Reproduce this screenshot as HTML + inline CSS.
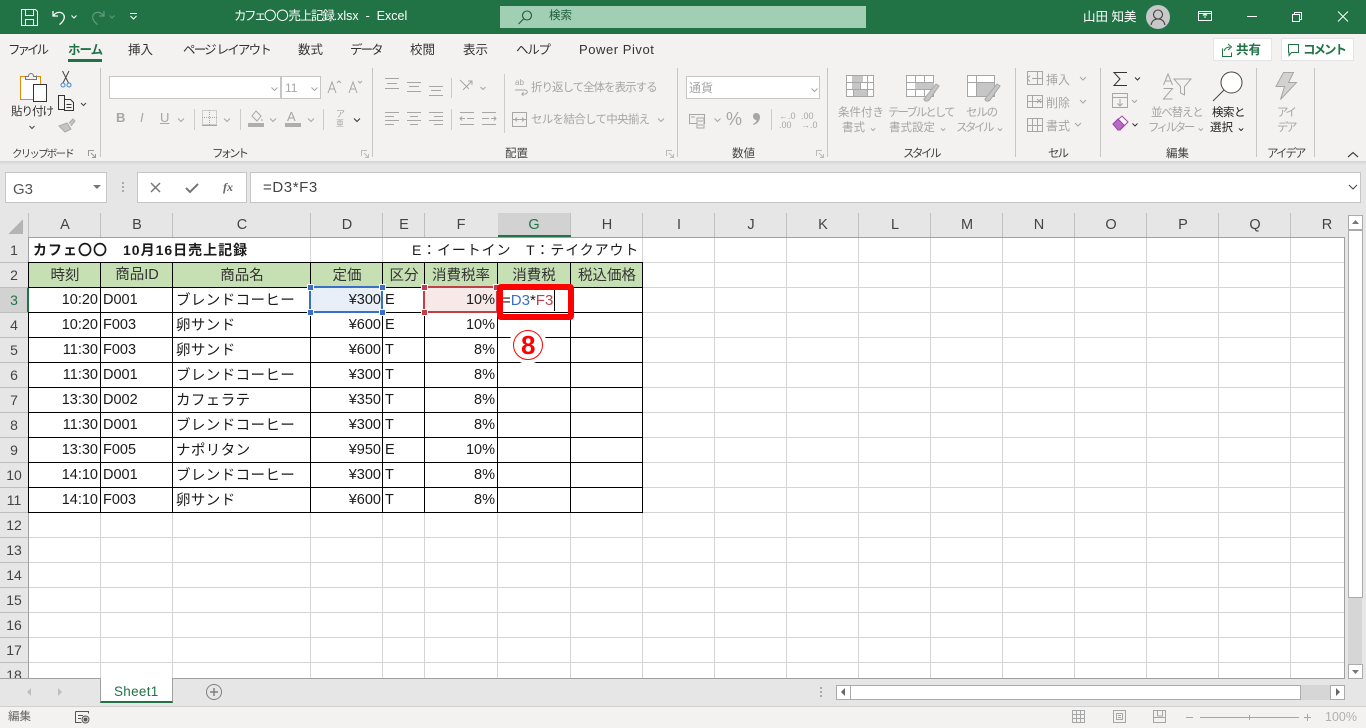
<!DOCTYPE html>
<html lang="ja"><head><meta charset="utf-8"><title>Excel</title>
<style>
*{box-sizing:border-box}
html,body{margin:0;padding:0;width:1366px;height:728px;overflow:hidden;background:#e6e6e6}
body{position:relative;font-family:"Liberation Sans","Noto Sans CJK JP",sans-serif;color:#222}
.a,.t,.c,.r,.h,.rh{position:absolute}
.t,.c,.r,.h,.rh{white-space:nowrap;line-height:1}
.tb{font-size:12.5px;color:#333;top:44px}
.g{color:#a6a6a6;font-size:11.5px}
.d{color:#333;font-size:11.5px}
.l{color:#444;font-size:11.5px;top:149px}
.c{font-size:14.5px;color:#1a1a1a;transform:translateX(-50%)}
.r{font-size:14.5px;color:#1a1a1a;transform:translateX(-100%)}
.h{font-size:14.5px;color:#1a1a1a}
.j{letter-spacing:.4px}
.rh{font-size:14px;color:#444;width:28px;left:0;text-align:center}
.sep{position:absolute;top:68px;width:1px;height:89px;background:#c6c6c6}
svg{position:absolute;overflow:visible}
</style></head><body>
<!-- title bar -->
<div class="a" style="left:0;top:0;width:1366px;height:34px;background:#217346"></div>
<svg style="left:0;top:0" width="1366" height="34" fill="none" stroke="#fff" stroke-width="1">
<path d="M21.5 9.5h14l2 2v14h-16zM25.5 9.5v6h8v-6M25.5 25.5v-6h8v6"/>
<path d="M53 11v5h5M53.500 15.500c3-4 8-4 10-1 2 3 0 7-4 10" stroke-width="1.300"/>
<path d="M71.500 15.500l2.500 2.500 2.500-2.500" stroke-width="1"/>
<path d="M104 11v5h-5M103.500 15.500c-3-4-8-4-10-1-2 3 0 7 4 10" stroke="#5f9c7e" stroke-width="1.200"/>
<path d="M109.500 15.500l2.500 2.500 2.500-2.500" stroke="#5f9c7e"/>
<path d="M130 13.500h7M130.500 16l3 3 3-3"/>
<rect x="1198.500" y="11.500" width="13" height="9"/><path d="M1205 18v-4M1203 15.500l2-2 2 2M1198.500 13.500h13"/>
<path d="M1247 16.500h10"/>
<path d="M1292.500 14.500h7v7h-7zM1294.500 14.500v-2h7v7h-2"/>
<path d="M1338 11.500l10 10M1348 11.500l-10 10"/>
</svg>
<div class="t" style="left:234px;top:10px;font-size:12.500px;color:#fff"><span style="letter-spacing:-2.500px">カフェ</span><span style="letter-spacing:-.3px">〇〇</span><span style="letter-spacing:-1.200px">売上記録</span>.xlsx&nbsp;&nbsp;-&nbsp;&nbsp;Excel</div>
<div class="a" style="left:500px;top:6px;width:366px;height:22px;background:#a0cfb4"></div>
<svg style="left:517px;top:9px" width="18" height="16" fill="none" stroke="#1f5c3a" stroke-width="1.100"><circle cx="10" cy="6.500" r="4.500"/><path d="M6.500 10l-5 5"/></svg>
<div class="t" style="left:549px;top:11px;font-size:11.500px;color:#1f5c3a">検索</div>
<div class="t" style="left:1083px;top:11px;font-size:12.500px;color:#fff">山田 知美</div>
<div class="a" style="left:1146px;top:5px;width:24px;height:24px;border-radius:50%;background:#c8c8c8"></div>
<svg style="left:1146px;top:5px" width="24" height="24" fill="none" stroke="#444" stroke-width="1.100"><circle cx="12" cy="9.500" r="4.500"/><path d="M5 20c1-5 4-6 7-6s6 1 7 6"/></svg>
<!-- ribbon -->
<div class="a" style="left:0;top:34px;width:1366px;height:127px;background:#f3f2f1"></div>
<div class="a" style="left:0;top:161px;width:1366px;height:4px;background:linear-gradient(#d2d2d2,#e6e6e6)"></div>
<div class="t tb" style="left:8px;letter-spacing:-3px">ファイル</div>
<div class="t tb" style="left:68px;font-weight:700;color:#217346;letter-spacing:-1px">ホーム</div>
<div class="a" style="left:68px;top:59px;width:34px;height:3px;background:#217346"></div>
<div class="t tb" style="left:128px">挿入</div>
<div class="t tb" style="left:183px;letter-spacing:-1.800px">ページ レイアウト</div>
<div class="t tb" style="left:298px">数式</div>
<div class="t tb" style="left:350px;letter-spacing:-2px">データ</div>
<div class="t tb" style="left:410px">校閲</div>
<div class="t tb" style="left:463px">表示</div>
<div class="t tb" style="left:516px;letter-spacing:-1.300px">ヘルプ</div>
<div class="t tb" style="left:579px;top:43px;font-size:13px;letter-spacing:.55px">Power Pivot</div>
<div class="a" style="left:1213px;top:38px;width:59px;height:23px;background:#fff;border:1px solid #e4e4e4"></div>
<svg style="left:1219px;top:42px" width="18" height="16" fill="none" stroke="#217346"><path d="M3.500 6.500v8h9v-4M5 9c1-3 3-4 6-4M9 2l3.500 3L9 8"/></svg>
<div class="t" style="left:1236px;top:44px;font-size:12.500px;font-weight:700;color:#217346">共有</div>
<div class="a" style="left:1281px;top:38px;width:73px;height:23px;background:#fff;border:1px solid #e4e4e4"></div>
<svg style="left:1287px;top:43px" width="14" height="14" fill="none" stroke="#217346"><path d="M1.500 1.500h10v8h-7l-2.500 3v-3h-.5z"/></svg>
<div class="t" style="left:1303px;top:44px;font-size:12.500px;font-weight:700;color:#217346;letter-spacing:-2px">コメント</div>
<!-- separators -->
<div class="sep" style="left:100px"></div><div class="sep" style="left:372px"></div><div class="sep" style="left:677px"></div><div class="sep" style="left:827px"></div><div class="sep" style="left:1015px"></div><div class="sep" style="left:1100px"></div><div class="sep" style="left:1256px"></div><div class="sep" style="left:1314px"></div>
<!-- clipboard -->
<svg style="left:0;top:66px" width="100" height="70" fill="none">
<rect x="20.500" y="10.500" width="20" height="23" stroke="#e8890c" fill="#fdfdfd"/>
<path d="M25.500 10.500h11v-1" stroke="#666"/><path d="M25.500 13.500v-3h3c0-4 5-4 5 0h3v3z" stroke="#777" fill="#f3f2f1"/>
<rect x="33.500" y="18.500" width="13" height="17" stroke="#333" fill="#fff"/>
<path d="M62.500 5l6 12M69 5l-6 12" stroke="#444"/><circle cx="63" cy="19" r="2" stroke="#3c86d0"/><circle cx="69" cy="19" r="2" stroke="#3c86d0"/>
<path d="M64.500 43.500h-6v-14h6v4" stroke="#333"/><path d="M64.500 33.500h6l3 3v8h-9z" stroke="#333"/><path d="M66.500 38.500h5M66.500 41.500h5" stroke="#333"/>
<path d="M81 37l2.500 2.500 2.500-2.500" stroke="#444"/>
<path d="M59 60l8-3 4 6-6 3zM69 57l4-4 2 2-4 5" fill="#c4c4c4" stroke="#aaa"/>
<path d="M29.500 60l2.500 2.500 2.500-2.500" stroke="#444"/>
</svg>
<div class="t d" style="left:11px;top:107px;font-size:11.500px;letter-spacing:-1px">貼り付け</div>
<div class="t l" style="left:12px;font-size:10.500px;letter-spacing:-1.800px">クリップボード</div>
<svg style="left:88px;top:150px" width="9" height="9" fill="none" stroke="#999"><path d="M.5 6V.5H6M3 3l4 4M4 7.500h3.500V4"/></svg>
<!-- font -->
<div class="a" style="left:109px;top:76px;width:172px;height:23px;background:#fff;border:1px solid #c6c6c6"></div>
<div class="a" style="left:281px;top:76px;width:40px;height:23px;background:#fff;border:1px solid #c6c6c6"></div>
<div class="t g" style="left:285px;top:82px;font-size:12px">11</div>
<svg style="left:0;top:60px" width="372" height="80" fill="none" stroke="#a6a6a6">
<path d="M271.500 27.500l3 3 3-3M311.500 27.500l3 3 3-3"/>
<path d="M178 58.500l3 3 3-3M224 58.500l3 3 3-3M270 58.500l3 3 3-3M308 58.500l3 3 3-3"/>
<path d="M354 58.500l3 3 3-3" stroke="#333"/>
<path d="M328 33l4-11 4 11M329.500 29h5M337 23l2-2 2 2M349 33l4-11 4 11M350.500 29h5M358 21l2 2 2-2"/>
</svg>
<div class="t g" style="left:116px;top:111px;font-weight:700;font-size:13px">B</div>
<div class="t g" style="left:140px;top:111px;font-style:italic;font-size:13px">I</div>
<div class="t g" style="left:160px;top:111px;text-decoration:underline;font-size:13px">U</div>
<div class="a" style="left:194px;top:109px;width:1px;height:21px;background:#ccc"></div>
<svg style="left:202px;top:110px" width="16" height="17" fill="none" stroke="#a6a6a6" stroke-dasharray="1 1"><rect x=".5" y=".5" width="14" height="14"/><path d="M7.500 0v15M0 7.500h15"/><path d="M0 15.500h15" stroke-dasharray="none"/></svg>
<div class="a" style="left:240px;top:109px;width:1px;height:21px;background:#ccc"></div>
<svg style="left:248px;top:110px" width="18" height="17" fill="none" stroke="#a6a6a6"><path d="M8 1l5 5-4 5-5-5zM14 9v2"/></svg>
<div class="a" style="left:248px;top:123px;width:16px;height:4px;background:#b0aeab"></div>
<div class="t g" style="left:287px;top:110px;font-size:13px">A</div>
<div class="a" style="left:285px;top:123px;width:16px;height:4px;background:#b0aeab"></div>
<div class="a" style="left:323px;top:109px;width:1px;height:21px;background:#ccc"></div>
<div class="t g" style="left:336px;top:110px;font-size:9px">ア</div>
<div class="t g" style="left:336px;top:120px;font-size:8px">亜</div>
<div class="t l" style="left:212px;letter-spacing:-3px">フォント</div>
<svg style="left:361px;top:150px" width="9" height="9" fill="none" stroke="#bbb"><path d="M.5 6V.5H6M3 3l4 4M4 7.500h3.500V4"/></svg>
<!-- alignment -->
<svg style="left:384px;top:76px" width="300" height="56" fill="none" stroke="#a6a6a6">
<path d="M1 2.500h14M3 7.500h10M1 12.500h14M23 6.500h14M25 10.500h10M23 15.500h14M45 10.500h14M47 14.500h10M45 19.500h14"/>
<path d="M1 36.500h14M1 40.500h9M1 44.500h14M1 48.500h9M23 36.500h14M26 40.500h8M23 44.500h14M26 48.500h8M45 36.500h14M50 40.500h9M45 44.500h14M50 48.500h9"/>
<path d="M76 4l9 9M79 14l9-9M84 5h4v4"/>
<path d="M96.500 11l2.500 2.500 2.500-2.500"/>
<path d="M76 36.500h14M83 42.500h7M76 48.500h14M81 42.500h-5M78 40.500l-2 2 2 2"/>
<path d="M98 36.500h14M98 42.500h7M98 48.500h14M107 42.500h5M110 40.500l2 2-2 2"/>
</svg>
<div class="a" style="left:451px;top:78px;width:1px;height:20px;background:#ccc"></div>
<div class="a" style="left:451px;top:109px;width:1px;height:21px;background:#ccc"></div>
<div class="a" style="left:504px;top:74px;width:1px;height:59px;background:#ccc"></div>
<svg style="left:512px;top:78px" width="160" height="50" fill="none" stroke="#a6a6a6">
<path d="M3 12h10c3 0 3 4 0 4h-3l1.500-2M10 16l1.500 2"/><rect x=".5" y="34.500" width="14" height="14"/><path d="M0 41.500h15M3 41.500l2-2M3 41.500l2 2M12 41.500l-2-2M12 41.500l-2 2"/>
<path d="M146 40.500l3 3 3-3"/>
</svg>
<div class="t" style="left:515px;top:79px;font-size:8px;color:#a6a6a6">ab</div>
<div class="t g" style="left:531px;top:83px;letter-spacing:-1px">折り返して全体を表示する</div>
<div class="t g" style="left:531px;top:115px;letter-spacing:-.7px">セルを結合して中央揃え</div>
<div class="t l" style="left:505px">配置</div>
<svg style="left:666px;top:150px" width="9" height="9" fill="none" stroke="#bbb"><path d="M.5 6V.5H6M3 3l4 4M4 7.500h3.500V4"/></svg>
<!-- number -->
<div class="a" style="left:686px;top:76px;width:134px;height:23px;background:#fff;border:1px solid #c6c6c6"></div>
<div class="t g" style="left:689px;top:82px;font-size:12px">通貨</div>
<svg style="left:0;top:80px" width="830" height="50" fill="none" stroke="#a6a6a6"><path d="M811.500 8.500l3 3 3-3M714.500 38.500l3 3 3-3"/><rect x="689.500" y="34.500" width="15" height="9"/><path d="M697 38h7v10h-7z" fill="#f3f2f1"/><path d="M691 37h4M698 41h5M698 45h5"/></svg>
<div class="t" style="left:726px;top:110px;font-size:18px;color:#a6a6a6">%</div>
<svg style="left:750px;top:110px" width="14" height="18"><path d="M6 3c2.500 0 4 1.500 4 4 0 4-3 7-6.500 8l-.5-1c2-1 3.500-2.500 3.500-4-2 0-3.500-1.500-3.500-3.500S4 3 6 3z" fill="#a6a6a6"/></svg>
<div class="a" style="left:771px;top:109px;width:1px;height:21px;background:#ccc"></div>
<div class="t" style="left:779px;top:112px;font-size:9px;line-height:9px;color:#a6a6a6;white-space:pre">←.0
.00</div>
<div class="t" style="left:801px;top:112px;font-size:9px;line-height:9px;color:#a6a6a6;white-space:pre">.00
→.0</div>
<div class="t l" style="left:732px">数値</div>
<svg style="left:816px;top:150px" width="9" height="9" fill="none" stroke="#bbb"><path d="M.5 6V.5H6M3 3l4 4M4 7.500h3.500V4"/></svg>
<!-- styles -->
<svg style="left:846px;top:75px" width="160" height="30" fill="none" stroke="#a6a6a6">
<rect x=".5" y=".5" width="27" height="21" fill="#fff"/><path d="M0 7.500h28M0 14.500h28M7.500 0v22M14.500 0v22M21.500 0v22"/>
<path d="M6 1h11v6H6zM6 8h8v6H6zM14 15h7v6h-7zM8 15h6v6H8z" fill="#c6c6c6" stroke="none"/>
<rect x="60.500" y=".5" width="27" height="21" fill="#fff"/><path d="M60 7.500h28M60 14.500h28M69.500 0v22M78.500 0v22"/><path d="M69 8h19v6H69z" fill="#c6c6c6" stroke="none"/>
<path d="M78 24l12-15 3 2-10 14c-2 2-5 1-5-1z" fill="#c6c6c6"/>
<rect x="121.500" y=".5" width="27" height="21" fill="#fff"/><path d="M121 7.500h28M130.500 0v22"/><path d="M131 8h17v13h-17z" fill="#c6c6c6" stroke="none"/>
<path d="M139 24l12-15 3 2-10 14c-2 2-5 1-5-1z" fill="#c6c6c6"/>
</svg>
<div class="t g" style="left:838px;top:108px">条件付き</div>
<div class="t g" style="left:842px;top:123px">書式 ⌄</div>
<div class="t g" style="left:888px;top:108px;letter-spacing:-2px">テーブルとして</div>
<div class="t g" style="left:889px;top:123px">書式設定 ⌄</div>
<div class="t g" style="left:966px;top:108px;letter-spacing:-1.200px">セルの</div>
<div class="t g" style="left:956px;top:123px"><span style="letter-spacing:-2.500px">スタイル</span> ⌄</div>
<div class="t l" style="left:903px;letter-spacing:-2.500px">スタイル</div>
<!-- cells -->
<svg style="left:1027px;top:70px" width="62" height="66" fill="none" stroke="#a6a6a6">
<rect x=".5" y="1.500" width="15" height="13"/><path d="M5 8.500h11M10.500 1v14M0 8.500l3-3M0 8.500l3 3"/>
<rect x=".5" y="25.500" width="15" height="12"/><path d="M0 31.500h15M5.500 25v13M10 29l4 4M14 29l-4 4"/>
<rect x=".5" y="48.500" width="15" height="13"/><path d="M0 55.500h15M5.500 48v14M10.500 48v14"/>
</svg>
<div class="t g" style="left:1046px;top:74px;font-size:12px">挿入</div><div class="t g" style="left:1046px;top:97px;font-size:12px">削除</div><div class="t g" style="left:1046px;top:120px;font-size:12px">書式</div>
<svg style="left:1075px;top:74px" width="18" height="60" fill="none" stroke="#a6a6a6"><path d="M5 3l3 3 3-3M5 26l3 3 3-3M0 49l3 3 3-3"/></svg>
<div class="t l" style="left:1048px;letter-spacing:-2px">セル</div>
<!-- edit -->
<svg style="left:1112px;top:70px" width="145" height="66" fill="none" stroke="#444">
<path d="M15 2.500H2l6 6.500-6 6.500h13" stroke="#333"/>
<path d="M23 7.500l2.500 2.500 2.500-2.500" stroke="#333"/>
<rect x=".5" y="23.500" width="15" height="14" stroke="#a6a6a6"/><path d="M0 27.500h16M8 29v7M5.500 33.500l2.500 2.500 2.500-2.500M20 30l2.500 2.500 2.500-2.500" stroke="#a6a6a6"/>
<path d="M1 54l9-8 6 6-8 8h-2z" fill="#fff" stroke="#a33fb0"/><path d="M1 54l5-5 6 6-4 5h-2z" fill="#b86bc2" stroke="#a33fb0"/>
<path d="M20.500 53.500l2.500 2.500 2.500-2.500" stroke="#333"/>
<path d="M51.500 15l4.500-11 4.500 11M53 11h6M51.500 18.500h9l-9 10.500h9M62 9h17l-6.500 7.500V25l-4-2v-6.500z" stroke="#a6a6a6"/>
<circle cx="119.500" cy="12.500" r="10.500" fill="#fff" stroke="#444"/><path d="M112 20l-11 11" stroke="#444"/>
</svg>
<div class="t g" style="left:1151px;top:108px;letter-spacing:-1.200px">並べ替えと</div>
<div class="t g" style="left:1148px;top:123px"><span style="letter-spacing:-2.500px">フィルター</span> ⌄</div>
<div class="t d" style="left:1212px;top:108px;color:#222;letter-spacing:-.5px">検索と</div>
<div class="t d" style="left:1210px;top:123px;color:#222">選択 ⌄</div>
<div class="t l" style="left:1166px">編集</div>
<!-- ideas -->
<svg style="left:1274px;top:71px" width="24" height="30" fill="#d2d2d2" stroke="#a6a6a6"><path d="M9.500 1.500h10l-5 10h8l-16 17 4-13H2z"/></svg>
<div class="t g" style="left:1277px;top:108px;letter-spacing:-2.500px">アイ</div><div class="t g" style="left:1277px;top:123px;letter-spacing:-2.500px">デア</div>
<div class="t l" style="left:1267px;letter-spacing:-2px">アイデア</div>
<svg style="left:1347px;top:151px" width="12" height="8" fill="none" stroke="#444" stroke-width="1.200"><path d="M1 6l5-4.500 5 4.500"/></svg>
<!-- formula bar -->
<div class="a" style="left:5px;top:172px;width:102px;height:31px;background:#fff;border:1px solid #c6c6c6"></div>
<div class="t" style="left:13px;top:182px;font-size:15px;color:#555">G3</div>
<svg style="left:93px;top:185px" width="9" height="5"><path d="M0 0h8l-4 4z" fill="#777"/></svg>
<div class="a" style="left:122px;top:182px;width:2px;height:2px;background:#aaa;box-shadow:0 4px #aaa,0 8px #aaa"></div>
<div class="a" style="left:137px;top:172px;width:110px;height:31px;background:#fff;border:1px solid #c6c6c6"></div>
<svg style="left:148px;top:180px" width="90" height="16" fill="none"><path d="M3 3l9 9M12 3l-9 9" stroke="#777" stroke-width="1.500"/><path d="M38 8l4 4 8-8" stroke="#777" stroke-width="2"/></svg>
<div class="t" style="left:223px;top:180px;font:italic 700 12px 'Liberation Serif',serif;color:#666">fx</div>
<div class="a" style="left:250px;top:172px;width:1111px;height:31px;background:#fff;border:1px solid #c6c6c6"></div>
<div class="t" style="left:263px;top:180px;font-size:15px;color:#444;letter-spacing:.6px">=D3*F3</div>
<svg style="left:1348px;top:184px" width="10" height="7" fill="none" stroke="#444"><path d="M1 1l4 4 4-4"/></svg>
<!-- grid -->
<div class="a" style="left:29px;top:238px;width:1316px;height:441px;background:#fff"></div>
<div class="a" style="left:0;top:213px;width:1345px;height:25px;background:#e6e6e6"></div>
<div class="a" style="left:0;top:288px;width:28px;height:24px;background:#d2d2d2"></div>
<div class="a" style="left:498px;top:213px;width:73px;height:24px;background:#d2d2d2"></div>
<div class="a" style="left:29px;top:263px;width:614px;height:24px;background:#c6e0b4"></div>
<div class="a" style="left:311px;top:288px;width:72px;height:24px;background:#e8eff9"></div>
<div class="a" style="left:425px;top:288px;width:73px;height:24px;background:#f8e9e9"></div>
<svg style="left:0;top:0" width="1366" height="728" fill="none" shape-rendering="crispEdges">
<path d="M8 234l15-15v15z" fill="#b4b4b4"/>
<path stroke="#d4d4d4" d="M100.500 262V678M172.500 262V678M310.500 238V678M382.500 238V678M424.500 262V678M497.500 262V678M570.500 262V678M642.500 238V678M714.500 238V678M786.500 238V678M858.500 238V678M930.500 238V678M1002.500 238V678M1074.500 238V678M1146.500 238V678M1218.500 238V678M1290.500 238V678"/>
<path stroke="#d4d4d4" d="M29 262.500H1344M29 287.500H1344M29 312.500H1344M29 337.500H1344M29 362.500H1344M29 387.500H1344M29 412.500H1344M29 437.500H1344M29 462.500H1344M29 487.500H1344M29 512.500H1344M29 537.500H1344M29 562.500H1344M29 587.500H1344M29 612.500H1344M29 637.500H1344M29 662.500H1344"/>
<path stroke="#c0c0c0" d="M28.500 213V238M100.500 213V238M172.500 213V238M310.500 213V238M382.500 213V238M424.500 213V238M570.500 213V238M642.500 213V238M714.500 213V238M786.500 213V238M858.500 213V238M930.500 213V238M1002.500 213V238M1074.500 213V238M1146.500 213V238M1218.500 213V238M1290.500 213V238"/>
<path stroke="#bdbdbd" d="M0 262.500H28M0 287.500H28M0 312.500H28M0 337.500H28M0 362.500H28M0 387.500H28M0 412.500H28M0 437.500H28M0 462.500H28M0 487.500H28M0 512.500H28M0 537.500H28M0 562.500H28M0 587.500H28M0 612.500H28M0 637.500H28M0 662.500H28"/>
<path stroke="#a0a0a0" d="M28.500 238V678M28 237.500H1344.500V678M0 678.500H100M172 678.500H1345"/>
<path stroke="#000" d="M28 262.500H643M28 287.500H643M28 312.500H643M28 337.500H643M28 362.500H643M28 387.500H643M28 412.500H643M28 437.500H643M28 462.500H643M28 487.500H643M28 512.500H643"/>
<path stroke="#000" d="M28.500 262V513M100.500 262V513M172.500 262V513M310.500 262V513M382.500 262V513M424.500 262V513M497.500 262V513M570.500 262V513M642.500 262V513"/>
<path stroke="#217346" stroke-width="2" d="M498 236h73M28 288v24"/>
<rect x="310" y="287" width="72" height="25" stroke="#3a6fc8" stroke-width="2"/>
<path fill="#3a6fc8" stroke="#fff" d="M307.500 284.500h6v6h-6zM379.500 284.500h6v6h-6zM307.500 309.500h6v6h-6zM379.500 309.500h6v6h-6z"/>
<rect x="424" y="287" width="73" height="25" stroke="#c0404a" stroke-width="2"/>
<path fill="#c0404a" stroke="#fff" d="M421.500 284.500h6v6h-6zM493.500 284.500h6v6h-6zM421.500 309.500h6v6h-6z"/>
</svg>
<!-- column headers -->
<div class="c" style="left:65px;top:218px;color:#444">A</div><div class="c" style="left:137px;top:218px;color:#444">B</div><div class="c" style="left:242px;top:218px;color:#444">C</div><div class="c" style="left:347px;top:218px;color:#444">D</div><div class="c" style="left:404px;top:218px;color:#444">E</div><div class="c" style="left:461px;top:218px;color:#444">F</div><div class="c" style="left:534px;top:218px;color:#217346">G</div><div class="c" style="left:607px;top:218px;color:#444">H</div><div class="c" style="left:679px;top:218px;color:#444">I</div><div class="c" style="left:751px;top:218px;color:#444">J</div><div class="c" style="left:823px;top:218px;color:#444">K</div><div class="c" style="left:895px;top:218px;color:#444">L</div><div class="c" style="left:967px;top:218px;color:#444">M</div><div class="c" style="left:1039px;top:218px;color:#444">N</div><div class="c" style="left:1111px;top:218px;color:#444">O</div><div class="c" style="left:1183px;top:218px;color:#444">P</div><div class="c" style="left:1255px;top:218px;color:#444">Q</div><div class="c" style="left:1327px;top:218px;color:#444">R</div>
<!-- row headers -->
<div class="rh" style="top:243px">1</div><div class="rh" style="top:268px">2</div><div class="rh" style="top:293px;color:#217346">3</div><div class="rh" style="top:318px">4</div><div class="rh" style="top:343px">5</div><div class="rh" style="top:368px">6</div><div class="rh" style="top:393px">7</div><div class="rh" style="top:418px">8</div><div class="rh" style="top:443px">9</div><div class="rh" style="top:468px">10</div><div class="rh" style="top:493px">11</div><div class="rh" style="top:518px">12</div><div class="rh" style="top:543px">13</div><div class="rh" style="top:568px">14</div><div class="rh" style="top:593px">15</div><div class="rh" style="top:618px">16</div><div class="rh" style="top:643px">17</div><div class="rh" style="top:668px;height:10px;overflow:hidden">18</div>
<!-- row 1 -->
<div class="h" style="left:33px;top:243px;font-weight:700;font-size:14px;letter-spacing:1px">カフェ〇〇　10月16日売上記録</div>
<div class="h" style="left:412px;top:243px;letter-spacing:.85px;font-size:14px">E：イートイン　T：テイクアウト</div>
<!-- row 2 -->
<div class="c" style="left:65px;top:269px;color:#333">時刻</div><div class="c" style="left:137px;top:268px;color:#333">商品ID</div><div class="c" style="left:242px;top:269px;color:#333">商品名</div><div class="c" style="left:347px;top:269px;color:#333">定価</div><div class="c" style="left:404px;top:269px;color:#333">区分</div><div class="c" style="left:461px;top:269px;color:#333">消費税率</div><div class="c" style="left:534px;top:269px;color:#333">消費税</div><div class="c" style="left:607px;top:269px;color:#333">税込価格</div>
<!-- data -->
<div class="r" style="left:98px;top:293px">10:20</div><div class="h" style="left:103px;top:293px">D001</div><div class="h j" style="left:176px;top:294px">ブレンドコーヒー</div><div class="r" style="left:381px;top:293px">¥300</div><div class="h" style="left:385px;top:293px">E</div><div class="r" style="left:495px;top:293px">10%</div>
<div class="r" style="left:98px;top:318px">10:20</div><div class="h" style="left:103px;top:318px">F003</div><div class="h j" style="left:176px;top:319px">卵サンド</div><div class="r" style="left:381px;top:318px">¥600</div><div class="h" style="left:385px;top:318px">E</div><div class="r" style="left:495px;top:318px">10%</div>
<div class="r" style="left:98px;top:343px">11:30</div><div class="h" style="left:103px;top:343px">F003</div><div class="h j" style="left:176px;top:344px">卵サンド</div><div class="r" style="left:381px;top:343px">¥600</div><div class="h" style="left:385px;top:343px">T</div><div class="r" style="left:495px;top:343px">8%</div>
<div class="r" style="left:98px;top:368px">11:30</div><div class="h" style="left:103px;top:368px">D001</div><div class="h j" style="left:176px;top:369px">ブレンドコーヒー</div><div class="r" style="left:381px;top:368px">¥300</div><div class="h" style="left:385px;top:368px">T</div><div class="r" style="left:495px;top:368px">8%</div>
<div class="r" style="left:98px;top:393px">13:30</div><div class="h" style="left:103px;top:393px">D002</div><div class="h j" style="left:176px;top:394px">カフェラテ</div><div class="r" style="left:381px;top:393px">¥350</div><div class="h" style="left:385px;top:393px">T</div><div class="r" style="left:495px;top:393px">8%</div>
<div class="r" style="left:98px;top:418px">11:30</div><div class="h" style="left:103px;top:418px">D001</div><div class="h j" style="left:176px;top:419px">ブレンドコーヒー</div><div class="r" style="left:381px;top:418px">¥300</div><div class="h" style="left:385px;top:418px">T</div><div class="r" style="left:495px;top:418px">8%</div>
<div class="r" style="left:98px;top:443px">13:30</div><div class="h" style="left:103px;top:443px">F005</div><div class="h j" style="left:176px;top:444px">ナポリタン</div><div class="r" style="left:381px;top:443px">¥950</div><div class="h" style="left:385px;top:443px">E</div><div class="r" style="left:495px;top:443px">10%</div>
<div class="r" style="left:98px;top:468px">14:10</div><div class="h" style="left:103px;top:468px">D001</div><div class="h j" style="left:176px;top:469px">ブレンドコーヒー</div><div class="r" style="left:381px;top:468px">¥300</div><div class="h" style="left:385px;top:468px">T</div><div class="r" style="left:495px;top:468px">8%</div>
<div class="r" style="left:98px;top:493px">14:10</div><div class="h" style="left:103px;top:493px">F003</div><div class="h j" style="left:176px;top:494px">卵サンド</div><div class="r" style="left:381px;top:493px">¥600</div><div class="h" style="left:385px;top:493px">T</div><div class="r" style="left:495px;top:493px">8%</div>
<!-- editing cell + annotation -->
<div class="a" style="left:500px;top:288px;width:72px;height:24px;background:#fff"></div>
<div class="h" style="left:502px;top:293px;font-size:15px">=<span style="color:#3a6fc8">D3</span>*<span style="color:#c0404a">F3</span></div>
<div class="a" style="left:554px;top:290px;width:1px;height:21px;background:#000"></div>
<div class="a" style="left:497px;top:284px;width:77px;height:36px;border:6px solid #f00;border-radius:4px"></div>
<div class="a" style="left:509px;top:326px;width:38px;height:38px;border-radius:50%;background:#fff"></div>
<div class="a" style="left:513px;top:330px;width:30px;height:30px;border-radius:50%;background:#fff;border:1px solid #f00"></div>
<div class="t" style="left:521px;top:332px;font-size:26px;font-weight:700;color:#f00">8</div>
<!-- vertical scrollbar -->
<div class="a" style="left:1345px;top:213px;width:21px;height:493px;background:#e6e6e6"></div>
<div class="a" style="left:1348px;top:597px;width:14px;height:67px;background:#d6d6d6"></div>
<div class="a" style="left:1348px;top:215px;width:15px;height:15px;background:#fff;border:1px solid #ababab"></div>
<svg style="left:1352px;top:220px" width="8" height="5"><path d="M3.500 0l3.500 4H0z" fill="#777"/></svg>
<div class="a" style="left:1348px;top:230px;width:15px;height:368px;background:#fff;border:1px solid #ababab"></div>
<div class="a" style="left:1348px;top:664px;width:15px;height:15px;background:#fff;border:1px solid #ababab"></div>
<svg style="left:1352px;top:670px" width="8" height="5"><path d="M0 0h7L3.500 4z" fill="#777"/></svg>
<!-- sheet tabs -->
<div class="a" style="left:0;top:679px;width:1345px;height:27px;background:#e6e6e6"></div>
<div class="a" style="left:0;top:706px;width:1366px;height:1px;background:#d0d0d0"></div>
<svg style="left:26px;top:687px" width="36" height="10"><path d="M5 1v8l-4-4zM32 1v8l4-4z" fill="#bdbdbd"/></svg>
<div class="a" style="left:100px;top:678px;width:73px;height:25px;background:#fff;border:solid #a0a0a0;border-width:0 1px 2px;border-bottom-color:#217346"></div>
<div class="t" style="left:114px;top:685px;font-size:13.500px;letter-spacing:.3px;color:#217346">Sheet1</div>
<svg style="left:205px;top:683px" width="18" height="18" fill="none" stroke="#808080"><circle cx="9" cy="9" r="7.500"/><path d="M5 9h8M9 5v8" stroke-width="1.500"/></svg>
<div class="a" style="left:820px;top:687px;width:2px;height:2px;background:#aaa;box-shadow:0 4px #aaa,0 8px #aaa"></div>
<div class="a" style="left:1300px;top:685px;width:31px;height:15px;background:#d6d6d6"></div>
<div class="a" style="left:836px;top:685px;width:15px;height:15px;background:#fff;border:1px solid #ababab"></div>
<svg style="left:841px;top:688px" width="6" height="9"><path d="M4 0v8L0 4z" fill="#666"/></svg>
<div class="a" style="left:850px;top:685px;width:451px;height:15px;background:#fff;border:1px solid #ababab"></div>
<div class="a" style="left:1330px;top:685px;width:15px;height:15px;background:#fff;border:1px solid #ababab"></div>
<svg style="left:1336px;top:688px" width="6" height="9"><path d="M0 0v8l4-4z" fill="#666"/></svg>
<!-- status bar -->
<div class="a" style="left:0;top:707px;width:1366px;height:21px;background:#f3f2f1"></div>
<div class="t" style="left:8px;top:712px;font-size:11.500px;color:#666">編集</div>
<svg style="left:75px;top:710px" width="16" height="15" fill="none" stroke="#555"><path d="M.5 1.500h13v2M.5 1.500v11h6M3 5.500h5M3 8.500h3"/><circle cx="10.500" cy="9.500" r="3.500"/><circle cx="10.500" cy="9.500" r="1.500" fill="#555"/></svg>
<svg style="left:1072px;top:709px" width="240" height="16" fill="none" stroke="#a6a6a6" shape-rendering="crispEdges">
<rect x=".5" y="1.500" width="12" height="12"/><path d="M4.500 1v13M8.500 1v13M0 5.500h13M0 9.500h13"/>
<rect x="41.500" y="1.500" width="12" height="12"/><path d="M44.500 4.500h6v6h-6zM46 6.500h3M46 8.500h3"/>
<path d="M81.500 1.500h12v12h-12zM85.500 1v6h5V1M81 8.500h13"/>
<path d="M114 8.500h7M128 8.500h99M177.500 6v5M232 8.500h7M235.500 5v7"/>
</svg>
<div class="t" style="left:1325px;top:711px;font-size:12.500px;color:#b0b0b0">100%</div>
</body></html>
